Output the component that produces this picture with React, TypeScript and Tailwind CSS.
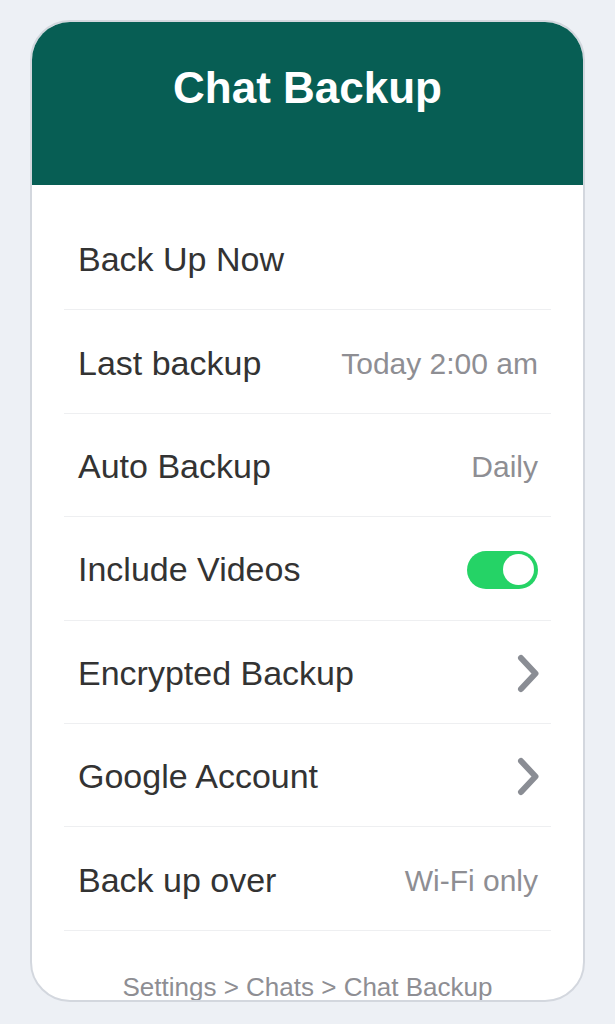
const ROWS: { label: string; value?: string; kind?: "toggle" | "chevron" }[] = [
  { label: "Back Up Now" },
  { label: "Last backup", value: "Today 2:00 am" },
  { label: "Auto Backup", value: "Daily" },
  { label: "Include Videos", kind: "toggle" },
  { label: "Encrypted Backup", kind: "chevron" },
  { label: "Google Account", kind: "chevron" },
  { label: "Back up over", value: "Wi-Fi only" },
];

function Chevron() {
  return (
    <svg width="25" height="41" viewBox="0 0 25 41" fill="none" className="mr-[-3px]">
      <path d="M5 5 L19.5 20.5 L5 36" stroke="#8a8d94" strokeWidth="6" strokeLinecap="round" strokeLinejoin="round" />
    </svg>
  );
}

function Toggle() {
  return (
    <div className="w-[71px] h-[38px] rounded-full bg-[#25d366] flex items-center justify-end pr-[4px]">
      <div className="w-[31px] h-[31px] rounded-full bg-white" />
    </div>
  );
}

export default function App() {
  return (
    <div className="min-h-[1024px] bg-[#edf0f5] pt-[20px] font-['Liberation_Sans',Arial,sans-serif]">
      <div className="mx-[30px] h-[982px] overflow-hidden rounded-[40px] border-2 border-[#d3d7de] bg-white">
        <header className="h-[163px] bg-[#075e54] pt-[44px] text-center">
          <h1 className="text-[44px] leading-[44px] font-bold text-white">Chat Backup</h1>
        </header>
        <ul className="mx-[32px] pt-[22px]">
          {ROWS.map((r) => (
            <li
              key={r.label}
              className="h-[103.4px] flex items-center justify-between border-b border-[#eeeff1] pl-[14px] pr-[13px] pt-[3px]"
            >
              <span className="text-[34px] text-[#333333]">{r.label}</span>
              {r.value && <span className="text-[30px] text-[#8e8e93]">{r.value}</span>}
              {r.kind === "toggle" && <Toggle />}
              {r.kind === "chevron" && <Chevron />}
            </li>
          ))}
        </ul>
        <p className="pt-[40px] text-center text-[26px] leading-[32px] text-[#8e8e93]">
          Settings &gt; Chats &gt; Chat Backup
        </p>
      </div>
    </div>
  );
}
